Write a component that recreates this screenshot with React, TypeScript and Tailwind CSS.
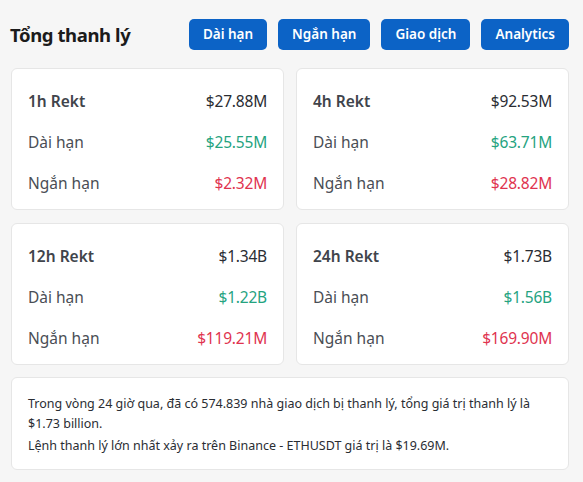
import React from "react";

type Card = { title: string; total: string; long: string; short: string };

const cards: Card[] = [
  { title: "1h Rekt", total: "$27.88M", long: "$25.55M", short: "$2.32M" },
  { title: "4h Rekt", total: "$92.53M", long: "$63.71M", short: "$28.82M" },
  { title: "12h Rekt", total: "$1.34B", long: "$1.22B", short: "$119.21M" },
  { title: "24h Rekt", total: "$1.73B", long: "$1.56B", short: "$169.90M" },
];

const font = { fontFamily: '"Noto Sans", "Liberation Sans", sans-serif' };

export default function App() {
  return (
    <div className="min-h-[482px] w-[583px] bg-[#f6f6f6] pl-[11px] pr-[14px] pt-[19px]" style={font}>
      <div className="flex items-center justify-between h-[31px]">
        <div className="text-[18.5px] font-bold text-[#1b1b1b] tracking-[-0.4px] -ml-[1px]">Tổng thanh lý</div>
        <div className="flex gap-[11px]">
          {["Dài hạn", "Ngắn hạn", "Giao dịch", "Analytics"].map((b) => (
            <button
              key={b}
              className="h-[31px] rounded-[5px] bg-[#0c63c6] px-[14px] text-[13.5px] font-semibold text-white"
            >
              {b}
            </button>
          ))}
        </div>
      </div>
      <div className="mt-[18px] grid grid-cols-2 gap-x-[12px] gap-y-[13px]">
        {cards.map((c) => (
          <div
            key={c.title}
            className="h-[142px] rounded-[6px] border border-[#e6e6e6] bg-white px-[16px] pt-[22px] pb-[15px] flex flex-col gap-[19px]"
          >
            <div className="flex h-[22px] items-center justify-between text-[15.5px]">
              <span className="font-semibold text-[#40444b]">{c.title}</span>
              <span className="text-[#2a2d33] tracking-[-0.2px]">{c.total}</span>
            </div>
            <div className="flex h-[22px] items-center justify-between text-[15.5px]">
              <span className="text-[#4a4e55]">Dài hạn</span>
              <span className="text-[#25a37f] tracking-[-0.2px]">{c.long}</span>
            </div>
            <div className="flex h-[22px] items-center justify-between text-[15.5px]">
              <span className="text-[#4a4e55]">Ngắn hạn</span>
              <span className="text-[#e0334f] tracking-[-0.2px]">{c.short}</span>
            </div>
          </div>
        ))}
      </div>
      <div className="mt-[12px] rounded-[6px] border border-[#e6e6e6] bg-white px-[16px] pt-[16px] pb-[13px] text-[12.5px] leading-[20px] text-[#2a2d33]">
        <div>
          Trong vòng 24 giờ qua, đã có 574.839 nhà giao dịch bị thanh lý, tổng giá trị thanh lý là $1.73 billion.
        </div>
        <div className="mt-[2px]">Lệnh thanh lý lớn nhất xảy ra trên Binance - ETHUSDT giá trị là $19.69M.</div>
      </div>
    </div>
  );
}
